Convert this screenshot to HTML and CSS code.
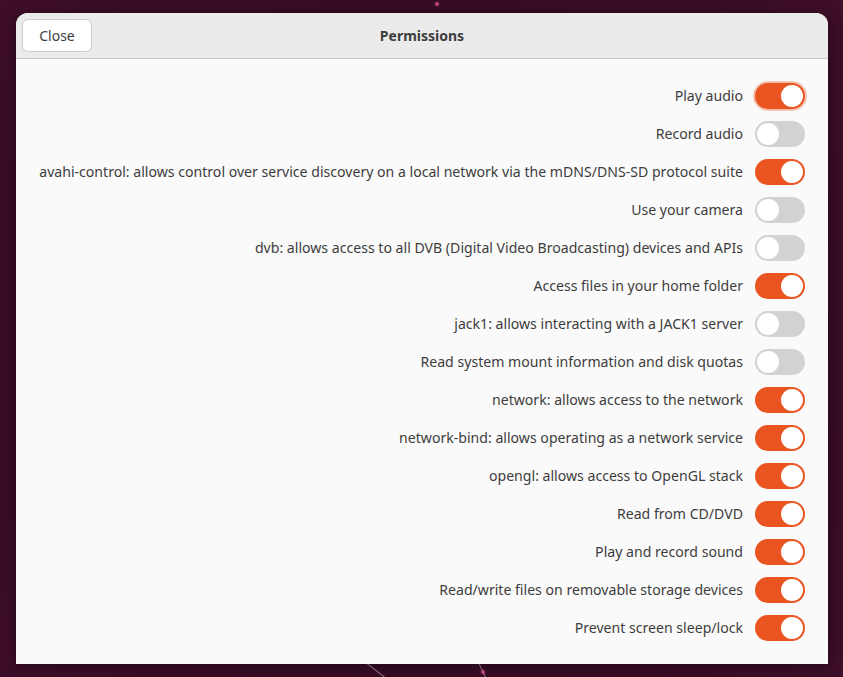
FILE: index.html
```html
<!DOCTYPE html>
<html lang="en">
<head>
    <meta charset="UTF-8">
    <title>Permissions</title>
    <link rel="stylesheet" href="styles.css">
</head>
<body>
    <div class="streak streak-a"></div>
    <div class="streak streak-b"></div>
    <div class="glow glow-top"></div>
    <div class="glow glow-bottom"></div>

    <div class="window">
        <header class="headerbar">
            <div class="header-start">
                <button class="btn">Close</button>
            </div>
            <div class="title">Permissions</div>
            <div class="header-end"></div>
        </header>

        <div class="content">
            <div class="row"><span>Play audio</span><div class="switch on focus"></div></div>
            <div class="row"><span>Record audio</span><div class="switch"></div></div>
            <div class="row"><span>avahi-control: allows control over service discovery on a local network via the mDNS/DNS-SD protocol suite</span><div class="switch on"></div></div>
            <div class="row"><span>Use your camera</span><div class="switch"></div></div>
            <div class="row"><span>dvb: allows access to all DVB (Digital Video Broadcasting) devices and APIs</span><div class="switch"></div></div>
            <div class="row"><span>Access files in your home folder</span><div class="switch on"></div></div>
            <div class="row"><span>jack1: allows interacting with a JACK1 server</span><div class="switch"></div></div>
            <div class="row"><span>Read system mount information and disk quotas</span><div class="switch"></div></div>
            <div class="row"><span>network: allows access to the network</span><div class="switch on"></div></div>
            <div class="row"><span>network-bind: allows operating as a network service</span><div class="switch on"></div></div>
            <div class="row"><span>opengl: allows access to OpenGL stack</span><div class="switch on"></div></div>
            <div class="row"><span>Read from CD/DVD</span><div class="switch on"></div></div>
            <div class="row"><span>Play and record sound</span><div class="switch on"></div></div>
            <div class="row"><span>Read/write files on removable storage devices</span><div class="switch on"></div></div>
            <div class="row"><span>Prevent screen sleep/lock</span><div class="switch on"></div></div>
        </div>
    </div>
</body>
</html>
```

FILE: styles.css
```css
* {
    margin: 0;
    padding: 0;
    box-sizing: border-box;
}

body {
    position: relative;
    height: 677px;
    padding: 13px 15px 13px 16px;
    overflow: hidden;
    font-family: "Noto Sans", "DejaVu Sans", sans-serif;
    background: radial-gradient(ellipse at 50% 50%, #2c0a1c 0%, #360c22 60%, #3f0e28 100%);
}

/* wallpaper bits */
.streak {
    position: absolute;
    height: 1px;
    background: rgba(220, 190, 210, 0.6);
    transform-origin: left center;
}

.streak-a {
    left: 367px;
    top: 663px;
    width: 26px;
    transform: rotate(38deg);
}

.streak-b {
    left: 479px;
    top: 663px;
    width: 16px;
    transform: rotate(65deg);
}

.glow {
    position: absolute;
    width: 6px;
    height: 6px;
    border-radius: 50%;
    background: radial-gradient(circle, #ff5fb0 0%, rgba(255, 60, 160, 0) 70%);
}

.glow-top {
    left: 434px;
    top: 1px;
}

.glow-bottom {
    left: 480px;
    top: 669px;
}

.window {
    position: relative;
    display: flex;
    flex-direction: column;
    height: 651px;
    background: #fafafa;
    border-radius: 12px 12px 0 0;
    box-shadow: 0 2px 14px rgba(0, 0, 0, 0.45);
}

.headerbar {
    display: grid;
    grid-template-columns: 1fr auto 1fr;
    align-items: center;
    height: 47px;
    padding: 0 6px;
    background: #ebebeb;
    border-bottom: 1px solid #c9c9c9;
    border-radius: 12px 12px 0 0;
}

.btn {
    width: 70px;
    height: 33px;
    font-family: inherit;
    font-size: 14px;
    color: #3d3d3d;
    background: #ffffff;
    border: 1px solid #cdcdcd;
    border-radius: 6px;
}

.title {
    font-size: 14px;
    font-weight: bold;
    color: #3d3d3d;
}

.content {
    flex: 1;
    padding: 18px 23px 17px;
}

.row {
    display: flex;
    justify-content: flex-end;
    align-items: center;
    gap: 12px;
    height: 38px;
    font-size: 14.1px;
    color: #3d3d3d;
}

.row span {
    padding-bottom: 2px;
}

.switch {
    position: relative;
    flex: none;
    width: 50px;
    height: 26px;
    border-radius: 13px;
    background: #d2d2d2;
}

.switch::after {
    content: '';
    position: absolute;
    top: 2px;
    left: 2px;
    width: 22px;
    height: 22px;
    border-radius: 50%;
    background: #ffffff;
}

.switch.on {
    background: #e95420;
}

.switch.on::after {
    left: 26px;
}

.switch.focus {
    box-shadow: 0 0 0 2px #f6c3b1;
}
```
